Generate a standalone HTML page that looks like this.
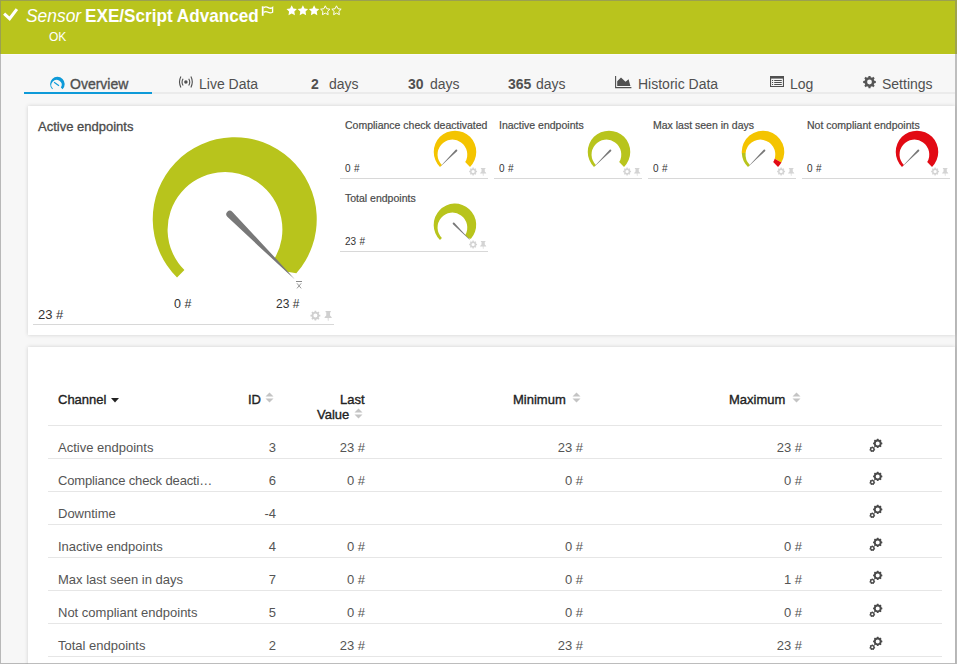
<!DOCTYPE html>
<html><head><meta charset="utf-8"><style>
*{box-sizing:border-box}
html,body{margin:0;padding:0}
body{width:957px;height:664px;overflow:hidden;position:relative;background:#f7f7f7;font-family:"Liberation Sans",sans-serif;color:#444}
.abs{position:absolute}
.gsvg{position:absolute;left:0;top:0}
#hdr{position:absolute;left:0;top:0;width:957px;height:54px;background:#b9c41d}
.t{position:absolute;white-space:nowrap;line-height:1}
.tab{position:absolute;top:77px;font-size:14px;color:#505050;white-space:nowrap;line-height:1}
.panel{position:absolute;background:#fff;box-shadow:0 0 4px rgba(0,0,0,0.16)}
.sep{position:absolute;left:48px;width:894px;height:1px;background:#e6e6e6}
.rt{position:absolute;font-size:13px;color:#555;white-space:nowrap;line-height:1}
.r{text-align:right}
.th{position:absolute;font-size:13px;color:#222;white-space:nowrap;line-height:1;-webkit-text-stroke:0.35px #222}
.gt{position:absolute;font-size:10.5px;color:#4a4a4a;-webkit-text-stroke:0.2px #4a4a4a;white-space:nowrap;line-height:1}
.gv{position:absolute;font-size:10px;word-spacing:0.6px;margin-top:1px;color:#333;white-space:nowrap;line-height:1}
.gl{position:absolute;left:340px;width:148px;height:1px;background:#d8d8d8}
</style></head><body>
<div id="hdr"></div>
<svg style="position:absolute;left:0;top:0" width="24" height="28" viewBox="0 0 24 28"><path d="M4.1 13.7L9.6 18.7L16.9 9.1" fill="none" stroke="#fff" stroke-width="3"/></svg>
<div class="t" style="left:26px;top:7px;font-size:18.5px;font-style:italic;color:#fff;transform-origin:0 0;transform:scaleX(0.94)">Sensor</div>
<div class="t" style="left:85px;top:7px;font-size:18.5px;font-weight:bold;color:#fff;transform-origin:0 0;transform:scaleX(0.927)">EXE/Script Advanced</div>
<svg class="gsvg" width="957" height="664" viewBox="0 0 957 664"><rect x="261.8" y="6.3" width="1.8" height="9.5" fill="#fff"/><path d="M263.6 7.6Q266 6.2 268.3 7.6T272.6 7.4V12.2Q270.3 13.5 268.1 12.3T263.6 12.3" fill="none" stroke="#fff" stroke-width="1.3"/></svg>
<svg style="position:absolute;left:286px;top:4px" width="58" height="13" viewBox="0 0 58 13"><path fill="#fff" d="M5.70 1.20L7.32 4.48L10.93 5.00L8.32 7.55L8.93 11.15L5.70 9.45L2.47 11.15L3.08 7.55L0.47 5.00L4.08 4.48Z"/><path fill="#fff" d="M16.90 1.20L18.52 4.48L22.13 5.00L19.52 7.55L20.13 11.15L16.90 9.45L13.67 11.15L14.28 7.55L11.67 5.00L15.28 4.48Z"/><path fill="#fff" d="M28.10 1.20L29.72 4.48L33.33 5.00L30.72 7.55L31.33 11.15L28.10 9.45L24.87 11.15L25.48 7.55L22.87 5.00L26.48 4.48Z"/><path fill="none" stroke="#fff" stroke-width="1" d="M39.30 1.80L40.74 4.72L43.96 5.19L41.63 7.46L42.18 10.66L39.30 9.15L36.42 10.66L36.97 7.46L34.64 5.19L37.86 4.72Z"/><path fill="none" stroke="#fff" stroke-width="1" d="M50.50 1.80L51.94 4.72L55.16 5.19L52.83 7.46L53.38 10.66L50.50 9.15L47.62 10.66L48.17 7.46L45.84 5.19L49.06 4.72Z"/></svg>
<div class="t" style="left:49px;top:31px;font-size:12px;color:#fff">OK</div>
<div class="abs" style="left:0;top:54px;width:957px;height:1px;background:#fbfbfb"></div>

<!-- tabs -->
<div class="abs" style="left:24px;top:92px;width:931px;height:2px;background:#ebebeb"></div>
<div class="abs" style="left:24px;top:92px;width:128px;height:2px;background:#0e9ad8"></div>
<svg class="gsvg" width="957" height="664" viewBox="0 0 957 664"><g transform="translate(57.4 84.1) scale(0.073)"><path fill="#0e9ad8" d="M-70.71 70.71A100 100 0 1 1 70.71 70.71L47.97 47.97A70.0 70.0 0 1 0 -61.70 61.70Z"/></g><path d="M54.1 82.2L59 85.7" stroke="#0e9ad8" stroke-width="1.2"/></svg>
<div class="tab" style="left:70px;font-size:14px;-webkit-text-stroke:0.35px #505050;color:#505050">Overview</div>
<svg class="gsvg" width="957" height="664" viewBox="0 0 957 664"><circle cx="185.9" cy="82.1" r="1.75" fill="#505050"/><path d="M180.9 76.6Q178.1 82 180.9 87.4M183.1 78.7Q181 82.1 183.1 85.5M188.7 78.7Q190.8 82.1 188.7 85.5M190.9 76.6Q193.7 82 190.9 87.4" fill="none" stroke="#505050" stroke-width="1.1"/></svg>
<div class="tab" style="left:199px">Live Data</div>
<div class="tab" style="left:311px;font-weight:bold">2</div>
<div class="tab" style="left:329px">days</div>
<div class="tab" style="left:408px;font-weight:bold">30</div>
<div class="tab" style="left:430px">days</div>
<div class="tab" style="left:508px;font-weight:bold">365</div>
<div class="tab" style="left:536px">days</div>
<svg class="abs" style="left:614px;top:76px" width="18" height="13" viewBox="0 0 18 13"><path d="M1.6 0V11.6H17.4" fill="none" stroke="#505050" stroke-width="1.1"/><path d="M3.2 10V5.2L7 1.6L11.5 5.8L14.6 3.2L16.4 10Z" fill="#505050"/></svg>
<div class="tab" style="left:638px">Historic Data</div>
<svg class="gsvg" width="957" height="664" viewBox="0 0 957 664"><g fill="#505050"><rect x="770" y="76" width="14" height="2.6"/><rect x="770" y="76" width="1.1" height="11"/><rect x="782.9" y="76" width="1.1" height="11"/><rect x="770" y="86" width="14" height="1"/><rect x="772" y="80" width="1.1" height="1"/><rect x="772" y="82" width="1.1" height="1"/><rect x="772" y="84" width="1.1" height="1"/><rect x="774.2" y="80" width="7.6" height="1"/><rect x="774.2" y="82" width="7.6" height="1"/><rect x="774.2" y="84" width="7.6" height="1"/></g></svg>
<div class="tab" style="left:790px">Log</div>
<svg class="abs" style="left:863px;top:76px" width="13" height="13" viewBox="0 0 13 13"><path fill="#555" fill-rule="evenodd" d="M5.33 1.14L5.50 -0.32L7.50 -0.32L7.67 1.14L9.11 1.74L10.26 0.82L11.68 2.24L10.76 3.39L11.36 4.83L12.82 5.00L12.82 7.00L11.36 7.17L10.76 8.61L11.68 9.76L10.26 11.18L9.11 10.26L7.67 10.86L7.50 12.32L5.50 12.32L5.33 10.86L3.89 10.26L2.74 11.18L1.32 9.76L2.24 8.61L1.64 7.17L0.18 7.00L0.18 5.00L1.64 4.83L2.24 3.39L1.32 2.24L2.74 0.82L3.89 1.74ZM8.90 6.00A2.4 2.4 0 1 0 4.10 6.00A2.4 2.4 0 1 0 8.90 6.00Z"/></svg>
<div class="tab" style="left:882px">Settings</div>

<!-- panel 1 -->
<div class="panel" style="left:28px;top:106px;width:927px;height:229px"></div>
<div class="t" style="left:38px;top:120px;font-size:13px;color:#4a4a4a;-webkit-text-stroke:0.3px #4a4a4a">Active endpoints</div>
<div class="t" style="left:38px;top:308px;font-size:13px;color:#333">23 #</div>
<div class="t" style="left:174px;top:298px;font-size:12.5px;color:#333">0 #</div>
<div class="t" style="left:276px;top:298px;font-size:12px;color:#333">23 #</div>
<div class="abs" style="left:296px;top:281px;width:6px;height:1px;background:#8a8a8a"></div><svg class="abs" style="left:296px;top:283px" width="6" height="6" viewBox="0 0 6 6"><path d="M1 0.3L5.2 5.4M5.2 0.3L1 5.4" stroke="#8f8f8f" stroke-width="0.9"/></svg>
<div class="abs" style="left:33px;top:324px;width:301px;height:1px;background:#d8d8d8"></div>

<div class="gt" style="left:345px;top:120px">Compliance check deactivated</div>
<div class="gv" style="left:345px;top:163px">0 #</div>
<div class="gl" style="top:178px"></div>
<div class="gt" style="left:499px;top:120px">Inactive endpoints</div>
<div class="gv" style="left:499px;top:163px">0 #</div>
<div class="gl" style="left:494px;top:178px"></div>
<div class="gt" style="left:653px;top:120px">Max last seen in days</div>
<div class="gv" style="left:653px;top:163px">0 #</div>
<div class="gl" style="left:648px;top:178px"></div>
<div class="gt" style="left:807px;top:120px">Not compliant endpoints</div>
<div class="gv" style="left:807px;top:163px">0 #</div>
<div class="gl" style="left:802px;top:178px"></div>
<div class="gt" style="left:345px;top:193px">Total endpoints</div>
<div class="gv" style="left:345px;top:236px">23 #</div>
<div class="gl" style="top:251px"></div>
<svg class="gsvg" width="957" height="664" viewBox="0 0 957 664"><g transform="translate(235 219.5) scale(0.82000)"><path fill="#b8c41c" d="M-70.71 70.71A100 100 0 1 1 74.8 65.7L63.7 63.7L47.97 47.97A70.0 70.0 0 1 0 -61.70 61.70Z"/><path fill="#787878" d="M-9.37 -3.36L28.26 31.87L63.61 64.63L72.83 72.83L64.63 63.61L31.87 28.26L-3.36 -9.37A4.25 4.25 0 0 0 -9.37 -3.36Z"/></g><g transform="translate(455 151.9) scale(0.21250)"><path fill="#f4c400" d="M-70.71 70.71A100 100 0 1 1 70.71 70.71L47.97 47.97A70.0 70.0 0 1 0 -61.70 61.70Z"/><path fill="#787878" d="M3.18 -9.55L-30.35 26.53L-61.51 60.43L-69.30 69.30L-60.43 61.51L-26.53 30.35L9.55 -3.18A4.5 4.5 0 0 0 3.18 -9.55Z"/></g><g transform="translate(609 151.9) scale(0.21250)"><path fill="#b8c41c" d="M-70.71 70.71A100 100 0 1 1 70.71 70.71L47.97 47.97A70.0 70.0 0 1 0 -61.70 61.70Z"/><path fill="#787878" d="M3.18 -9.55L-30.35 26.53L-61.51 60.43L-69.30 69.30L-60.43 61.51L-26.53 30.35L9.55 -3.18A4.5 4.5 0 0 0 3.18 -9.55Z"/></g><g transform="translate(763 151.9) scale(0.21250)"><path fill="#b8c41c" d="M-70.71 70.71A100 100 0 0 1 -99.89 4.7L-81.80 4.7A70.0 70.0 0 0 0 -61.70 61.70Z"/><path fill="#f4c400" d="M-99.89 4.7A100 100 0 1 1 86.60 50.00L55.01 31.76A70.0 70.0 0 1 0 -81.80 4.7Z"/><path fill="#e20a14" d="M86.60 50.00A100 100 0 0 1 70.71 70.71L47.97 47.97A70.0 70.0 0 0 0 55.01 31.76Z"/><path fill="#787878" d="M3.18 -9.55L-30.35 26.53L-61.51 60.43L-69.30 69.30L-60.43 61.51L-26.53 30.35L9.55 -3.18A4.5 4.5 0 0 0 3.18 -9.55Z"/></g><g transform="translate(917 151.9) scale(0.21250)"><path fill="#e20a14" d="M-70.71 70.71A100 100 0 1 1 70.71 70.71L47.97 47.97A70.0 70.0 0 1 0 -61.70 61.70Z"/><path fill="#787878" d="M3.18 -9.55L-30.35 26.53L-61.51 60.43L-69.30 69.30L-60.43 61.51L-26.53 30.35L9.55 -3.18A4.5 4.5 0 0 0 3.18 -9.55Z"/></g><g transform="translate(455 224.9) scale(0.21250)"><path fill="#b8c41c" d="M-70.71 70.71A100 100 0 1 1 74.8 65.7L63.7 63.7L47.97 47.97A70.0 70.0 0 1 0 -61.70 61.70Z"/><path fill="#787878" d="M-9.55 -3.18L28.16 31.98L63.58 64.66L72.83 72.83L64.66 63.58L31.98 28.16L-3.18 -9.55A4.5 4.5 0 0 0 -9.55 -3.18Z"/></g></svg>

<!-- panel 2 -->
<div class="panel" style="left:28px;top:347px;width:927px;height:330px"></div>
<div class="th" style="left:58px;top:393px">Channel</div>
<svg class="abs" style="left:111px;top:398px" width="8" height="5" viewBox="0 0 8 5"><path d="M0 0H8L4 4.5Z" fill="#222"/></svg>
<div class="th" style="left:248px;top:393px">ID</div>
<svg style="position:absolute;left:265px;top:392px" width="9" height="11" viewBox="0 0 9 11"><path d="M0.5 4.5L4.5 0.5L8.5 4.5Z" fill="#c4c4c4"/><path d="M0.5 6.5L4.5 10.5L8.5 6.5Z" fill="#c4c4c4"/></svg>
<div class="th" style="left:340px;top:393px">Last</div>
<div class="th" style="left:317px;top:408px">Value</div>
<svg style="position:absolute;left:354px;top:408px" width="9" height="11" viewBox="0 0 9 11"><path d="M0.5 4.5L4.5 0.5L8.5 4.5Z" fill="#c4c4c4"/><path d="M0.5 6.5L4.5 10.5L8.5 6.5Z" fill="#c4c4c4"/></svg>
<div class="th" style="left:513px;top:393px">Minimum</div>
<svg style="position:absolute;left:572px;top:392px" width="9" height="11" viewBox="0 0 9 11"><path d="M0.5 4.5L4.5 0.5L8.5 4.5Z" fill="#c4c4c4"/><path d="M0.5 6.5L4.5 10.5L8.5 6.5Z" fill="#c4c4c4"/></svg>
<div class="th" style="left:729px;top:393px">Maximum</div>
<svg style="position:absolute;left:792px;top:392px" width="9" height="11" viewBox="0 0 9 11"><path d="M0.5 4.5L4.5 0.5L8.5 4.5Z" fill="#c4c4c4"/><path d="M0.5 6.5L4.5 10.5L8.5 6.5Z" fill="#c4c4c4"/></svg>
<div class="sep" style="top:425px"></div><div class="rt" style="left:58px;top:441px;">Active endpoints</div><div class="rt r" style="right:681px;top:441px">3</div><div class="rt r" style="right:592px;top:441px">23 #</div><div class="rt r" style="right:374px;top:441px">23 #</div><div class="rt r" style="right:155px;top:441px">23 #</div><div class="sep" style="top:458px"></div><div class="rt" style="left:58px;top:474px;letter-spacing:-0.14px;">Compliance check deacti…</div><div class="rt r" style="right:681px;top:474px">6</div><div class="rt r" style="right:592px;top:474px">0 #</div><div class="rt r" style="right:374px;top:474px">0 #</div><div class="rt r" style="right:155px;top:474px">0 #</div><div class="sep" style="top:491px"></div><div class="rt" style="left:58px;top:507px;">Downtime</div><div class="rt r" style="right:681px;top:507px">-4</div><div class="sep" style="top:524px"></div><div class="rt" style="left:58px;top:540px;">Inactive endpoints</div><div class="rt r" style="right:681px;top:540px">4</div><div class="rt r" style="right:592px;top:540px">0 #</div><div class="rt r" style="right:374px;top:540px">0 #</div><div class="rt r" style="right:155px;top:540px">0 #</div><div class="sep" style="top:557px"></div><div class="rt" style="left:58px;top:573px;">Max last seen in days</div><div class="rt r" style="right:681px;top:573px">7</div><div class="rt r" style="right:592px;top:573px">0 #</div><div class="rt r" style="right:374px;top:573px">0 #</div><div class="rt r" style="right:155px;top:573px">1 #</div><div class="sep" style="top:590px"></div><div class="rt" style="left:58px;top:606px;">Not compliant endpoints</div><div class="rt r" style="right:681px;top:606px">5</div><div class="rt r" style="right:592px;top:606px">0 #</div><div class="rt r" style="right:374px;top:606px">0 #</div><div class="rt r" style="right:155px;top:606px">0 #</div><div class="sep" style="top:623px"></div><div class="rt" style="left:58px;top:639px;">Total endpoints</div><div class="rt r" style="right:681px;top:639px">2</div><div class="rt r" style="right:592px;top:639px">23 #</div><div class="rt r" style="right:374px;top:639px">23 #</div><div class="rt r" style="right:155px;top:639px">23 #</div><div class="sep" style="top:656px"></div>
<svg class="gsvg" width="957" height="664" viewBox="0 0 957 664"><path fill="#d0d0d0" fill-rule="evenodd" d="M314.49 311.81L314.62 310.66L316.18 310.66L316.31 311.81L317.44 312.27L318.34 311.55L319.45 312.66L318.73 313.56L319.19 314.69L320.34 314.82L320.34 316.38L319.19 316.51L318.73 317.64L319.45 318.54L318.34 319.65L317.44 318.93L316.31 319.39L316.18 320.54L314.62 320.54L314.49 319.39L313.36 318.93L312.46 319.65L311.35 318.54L312.07 317.64L311.61 316.51L310.46 316.38L310.46 314.82L311.61 314.69L312.07 313.56L311.35 312.66L312.46 311.55L313.36 312.27ZM317.40 315.60A2.0 2.0 0 1 0 313.40 315.60A2.0 2.0 0 1 0 317.40 315.60Z"/><path fill="#d0d0d0" d="M325.55 311.00L330.75 311.00L330.75 312.25L330.04 312.25L330.04 315.50L331.70 317.25L331.70 318.00L328.62 318.00L328.39 321.00L327.91 321.00L327.68 318.00L324.60 318.00L324.60 317.25L326.26 315.50L326.26 312.25L325.55 312.25Z"/><path fill="#d4d4d4" fill-rule="evenodd" d="M472.37 168.47L472.47 167.55L473.73 167.55L473.83 168.47L474.73 168.84L475.45 168.26L476.34 169.15L475.76 169.87L476.13 170.77L477.05 170.87L477.05 172.13L476.13 172.23L475.76 173.13L476.34 173.85L475.45 174.74L474.73 174.16L473.83 174.53L473.73 175.45L472.47 175.45L472.37 174.53L471.47 174.16L470.75 174.74L469.86 173.85L470.44 173.13L470.07 172.23L469.15 172.13L469.15 170.87L470.07 170.77L470.44 169.87L469.86 169.15L470.75 168.26L471.47 168.84ZM474.70 171.50A1.6 1.6 0 1 0 471.50 171.50A1.6 1.6 0 1 0 474.70 171.50Z"/><path fill="#d4d4d4" d="M480.91 167.90L485.39 167.90L485.39 168.91L484.78 168.91L484.78 171.55L486.20 172.96L486.20 173.57L483.56 173.57L483.35 176.00L482.95 176.00L482.74 173.57L480.10 173.57L480.10 172.96L481.52 171.55L481.52 168.91L480.91 168.91Z"/><path fill="#d4d4d4" fill-rule="evenodd" d="M626.37 168.47L626.47 167.55L627.73 167.55L627.83 168.47L628.73 168.84L629.45 168.26L630.34 169.15L629.76 169.87L630.13 170.77L631.05 170.87L631.05 172.13L630.13 172.23L629.76 173.13L630.34 173.85L629.45 174.74L628.73 174.16L627.83 174.53L627.73 175.45L626.47 175.45L626.37 174.53L625.47 174.16L624.75 174.74L623.86 173.85L624.44 173.13L624.07 172.23L623.15 172.13L623.15 170.87L624.07 170.77L624.44 169.87L623.86 169.15L624.75 168.26L625.47 168.84ZM628.70 171.50A1.6 1.6 0 1 0 625.50 171.50A1.6 1.6 0 1 0 628.70 171.50Z"/><path fill="#d4d4d4" d="M634.91 167.90L639.39 167.90L639.39 168.91L638.78 168.91L638.78 171.55L640.20 172.96L640.20 173.57L637.56 173.57L637.35 176.00L636.95 176.00L636.74 173.57L634.10 173.57L634.10 172.96L635.52 171.55L635.52 168.91L634.91 168.91Z"/><path fill="#d4d4d4" fill-rule="evenodd" d="M780.37 168.47L780.47 167.55L781.73 167.55L781.83 168.47L782.73 168.84L783.45 168.26L784.34 169.15L783.76 169.87L784.13 170.77L785.05 170.87L785.05 172.13L784.13 172.23L783.76 173.13L784.34 173.85L783.45 174.74L782.73 174.16L781.83 174.53L781.73 175.45L780.47 175.45L780.37 174.53L779.47 174.16L778.75 174.74L777.86 173.85L778.44 173.13L778.07 172.23L777.15 172.13L777.15 170.87L778.07 170.77L778.44 169.87L777.86 169.15L778.75 168.26L779.47 168.84ZM782.70 171.50A1.6 1.6 0 1 0 779.50 171.50A1.6 1.6 0 1 0 782.70 171.50Z"/><path fill="#d4d4d4" d="M788.91 167.90L793.39 167.90L793.39 168.91L792.78 168.91L792.78 171.55L794.20 172.96L794.20 173.57L791.56 173.57L791.35 176.00L790.95 176.00L790.74 173.57L788.10 173.57L788.10 172.96L789.52 171.55L789.52 168.91L788.91 168.91Z"/><path fill="#d4d4d4" fill-rule="evenodd" d="M934.37 168.47L934.47 167.55L935.73 167.55L935.83 168.47L936.73 168.84L937.45 168.26L938.34 169.15L937.76 169.87L938.13 170.77L939.05 170.87L939.05 172.13L938.13 172.23L937.76 173.13L938.34 173.85L937.45 174.74L936.73 174.16L935.83 174.53L935.73 175.45L934.47 175.45L934.37 174.53L933.47 174.16L932.75 174.74L931.86 173.85L932.44 173.13L932.07 172.23L931.15 172.13L931.15 170.87L932.07 170.77L932.44 169.87L931.86 169.15L932.75 168.26L933.47 168.84ZM936.70 171.50A1.6 1.6 0 1 0 933.50 171.50A1.6 1.6 0 1 0 936.70 171.50Z"/><path fill="#d4d4d4" d="M942.91 167.90L947.39 167.90L947.39 168.91L946.78 168.91L946.78 171.55L948.20 172.96L948.20 173.57L945.56 173.57L945.35 176.00L944.95 176.00L944.74 173.57L942.10 173.57L942.10 172.96L943.52 171.55L943.52 168.91L942.91 168.91Z"/><path fill="#d4d4d4" fill-rule="evenodd" d="M472.37 241.47L472.47 240.55L473.73 240.55L473.83 241.47L474.73 241.84L475.45 241.26L476.34 242.15L475.76 242.87L476.13 243.77L477.05 243.87L477.05 245.13L476.13 245.23L475.76 246.13L476.34 246.85L475.45 247.74L474.73 247.16L473.83 247.53L473.73 248.45L472.47 248.45L472.37 247.53L471.47 247.16L470.75 247.74L469.86 246.85L470.44 246.13L470.07 245.23L469.15 245.13L469.15 243.87L470.07 243.77L470.44 242.87L469.86 242.15L470.75 241.26L471.47 241.84ZM474.70 244.50A1.6 1.6 0 1 0 471.50 244.50A1.6 1.6 0 1 0 474.70 244.50Z"/><path fill="#d4d4d4" d="M480.91 240.90L485.39 240.90L485.39 241.91L484.78 241.91L484.78 244.55L486.20 245.96L486.20 246.57L483.56 246.57L483.35 249.00L482.95 249.00L482.74 246.57L480.10 246.57L480.10 245.96L481.52 244.55L481.52 241.91L480.91 241.91Z"/><path fill="#4a4a4a" fill-rule="evenodd" d="M876.77 439.51L876.96 438.76L878.44 438.76L878.63 439.51L879.79 439.99L880.46 439.60L881.50 440.64L881.11 441.31L881.59 442.47L882.34 442.66L882.34 444.14L881.59 444.33L881.11 445.49L881.50 446.16L880.46 447.20L879.79 446.81L878.63 447.29L878.44 448.04L876.96 448.04L876.77 447.29L875.61 446.81L874.94 447.20L873.90 446.16L874.29 445.49L873.81 444.33L873.06 444.14L873.06 442.66L873.81 442.47L874.29 441.31L873.90 440.64L874.94 439.60L875.61 439.99ZM879.70 443.40A2.0 2.0 0 1 0 875.70 443.40A2.0 2.0 0 1 0 879.70 443.40Z"/><path fill="#4a4a4a" fill-rule="evenodd" d="M871.66 446.99L871.78 446.45L872.82 446.45L872.94 446.99L873.71 447.36L874.21 447.12L874.85 447.93L874.51 448.36L874.70 449.19L875.20 449.43L874.97 450.44L874.41 450.44L873.88 451.11L874.00 451.65L873.07 452.10L872.73 451.66L871.87 451.66L871.53 452.10L870.60 451.65L870.72 451.11L870.19 450.44L869.63 450.44L869.40 449.43L869.90 449.19L870.09 448.36L869.75 447.93L870.39 447.12L870.89 447.36ZM873.30 449.30A1.0 1.0 0 1 0 871.30 449.30A1.0 1.0 0 1 0 873.30 449.30Z"/><path fill="#4a4a4a" fill-rule="evenodd" d="M876.77 472.51L876.96 471.76L878.44 471.76L878.63 472.51L879.79 472.99L880.46 472.60L881.50 473.64L881.11 474.31L881.59 475.47L882.34 475.66L882.34 477.14L881.59 477.33L881.11 478.49L881.50 479.16L880.46 480.20L879.79 479.81L878.63 480.29L878.44 481.04L876.96 481.04L876.77 480.29L875.61 479.81L874.94 480.20L873.90 479.16L874.29 478.49L873.81 477.33L873.06 477.14L873.06 475.66L873.81 475.47L874.29 474.31L873.90 473.64L874.94 472.60L875.61 472.99ZM879.70 476.40A2.0 2.0 0 1 0 875.70 476.40A2.0 2.0 0 1 0 879.70 476.40Z"/><path fill="#4a4a4a" fill-rule="evenodd" d="M871.66 479.99L871.78 479.45L872.82 479.45L872.94 479.99L873.71 480.36L874.21 480.12L874.85 480.93L874.51 481.36L874.70 482.19L875.20 482.43L874.97 483.44L874.41 483.44L873.88 484.11L874.00 484.65L873.07 485.10L872.73 484.66L871.87 484.66L871.53 485.10L870.60 484.65L870.72 484.11L870.19 483.44L869.63 483.44L869.40 482.43L869.90 482.19L870.09 481.36L869.75 480.93L870.39 480.12L870.89 480.36ZM873.30 482.30A1.0 1.0 0 1 0 871.30 482.30A1.0 1.0 0 1 0 873.30 482.30Z"/><path fill="#4a4a4a" fill-rule="evenodd" d="M876.77 505.51L876.96 504.76L878.44 504.76L878.63 505.51L879.79 505.99L880.46 505.60L881.50 506.64L881.11 507.31L881.59 508.47L882.34 508.66L882.34 510.14L881.59 510.33L881.11 511.49L881.50 512.16L880.46 513.20L879.79 512.81L878.63 513.29L878.44 514.04L876.96 514.04L876.77 513.29L875.61 512.81L874.94 513.20L873.90 512.16L874.29 511.49L873.81 510.33L873.06 510.14L873.06 508.66L873.81 508.47L874.29 507.31L873.90 506.64L874.94 505.60L875.61 505.99ZM879.70 509.40A2.0 2.0 0 1 0 875.70 509.40A2.0 2.0 0 1 0 879.70 509.40Z"/><path fill="#4a4a4a" fill-rule="evenodd" d="M871.66 512.99L871.78 512.45L872.82 512.45L872.94 512.99L873.71 513.36L874.21 513.12L874.85 513.93L874.51 514.36L874.70 515.19L875.20 515.43L874.97 516.44L874.41 516.44L873.88 517.11L874.00 517.65L873.07 518.10L872.73 517.66L871.87 517.66L871.53 518.10L870.60 517.65L870.72 517.11L870.19 516.44L869.63 516.44L869.40 515.43L869.90 515.19L870.09 514.36L869.75 513.93L870.39 513.12L870.89 513.36ZM873.30 515.30A1.0 1.0 0 1 0 871.30 515.30A1.0 1.0 0 1 0 873.30 515.30Z"/><path fill="#4a4a4a" fill-rule="evenodd" d="M876.77 538.51L876.96 537.76L878.44 537.76L878.63 538.51L879.79 538.99L880.46 538.60L881.50 539.64L881.11 540.31L881.59 541.47L882.34 541.66L882.34 543.14L881.59 543.33L881.11 544.49L881.50 545.16L880.46 546.20L879.79 545.81L878.63 546.29L878.44 547.04L876.96 547.04L876.77 546.29L875.61 545.81L874.94 546.20L873.90 545.16L874.29 544.49L873.81 543.33L873.06 543.14L873.06 541.66L873.81 541.47L874.29 540.31L873.90 539.64L874.94 538.60L875.61 538.99ZM879.70 542.40A2.0 2.0 0 1 0 875.70 542.40A2.0 2.0 0 1 0 879.70 542.40Z"/><path fill="#4a4a4a" fill-rule="evenodd" d="M871.66 545.99L871.78 545.45L872.82 545.45L872.94 545.99L873.71 546.36L874.21 546.12L874.85 546.93L874.51 547.36L874.70 548.19L875.20 548.43L874.97 549.44L874.41 549.44L873.88 550.11L874.00 550.65L873.07 551.10L872.73 550.66L871.87 550.66L871.53 551.10L870.60 550.65L870.72 550.11L870.19 549.44L869.63 549.44L869.40 548.43L869.90 548.19L870.09 547.36L869.75 546.93L870.39 546.12L870.89 546.36ZM873.30 548.30A1.0 1.0 0 1 0 871.30 548.30A1.0 1.0 0 1 0 873.30 548.30Z"/><path fill="#4a4a4a" fill-rule="evenodd" d="M876.77 571.51L876.96 570.76L878.44 570.76L878.63 571.51L879.79 571.99L880.46 571.60L881.50 572.64L881.11 573.31L881.59 574.47L882.34 574.66L882.34 576.14L881.59 576.33L881.11 577.49L881.50 578.16L880.46 579.20L879.79 578.81L878.63 579.29L878.44 580.04L876.96 580.04L876.77 579.29L875.61 578.81L874.94 579.20L873.90 578.16L874.29 577.49L873.81 576.33L873.06 576.14L873.06 574.66L873.81 574.47L874.29 573.31L873.90 572.64L874.94 571.60L875.61 571.99ZM879.70 575.40A2.0 2.0 0 1 0 875.70 575.40A2.0 2.0 0 1 0 879.70 575.40Z"/><path fill="#4a4a4a" fill-rule="evenodd" d="M871.66 578.99L871.78 578.45L872.82 578.45L872.94 578.99L873.71 579.36L874.21 579.12L874.85 579.93L874.51 580.36L874.70 581.19L875.20 581.43L874.97 582.44L874.41 582.44L873.88 583.11L874.00 583.65L873.07 584.10L872.73 583.66L871.87 583.66L871.53 584.10L870.60 583.65L870.72 583.11L870.19 582.44L869.63 582.44L869.40 581.43L869.90 581.19L870.09 580.36L869.75 579.93L870.39 579.12L870.89 579.36ZM873.30 581.30A1.0 1.0 0 1 0 871.30 581.30A1.0 1.0 0 1 0 873.30 581.30Z"/><path fill="#4a4a4a" fill-rule="evenodd" d="M876.77 604.51L876.96 603.76L878.44 603.76L878.63 604.51L879.79 604.99L880.46 604.60L881.50 605.64L881.11 606.31L881.59 607.47L882.34 607.66L882.34 609.14L881.59 609.33L881.11 610.49L881.50 611.16L880.46 612.20L879.79 611.81L878.63 612.29L878.44 613.04L876.96 613.04L876.77 612.29L875.61 611.81L874.94 612.20L873.90 611.16L874.29 610.49L873.81 609.33L873.06 609.14L873.06 607.66L873.81 607.47L874.29 606.31L873.90 605.64L874.94 604.60L875.61 604.99ZM879.70 608.40A2.0 2.0 0 1 0 875.70 608.40A2.0 2.0 0 1 0 879.70 608.40Z"/><path fill="#4a4a4a" fill-rule="evenodd" d="M871.66 611.99L871.78 611.45L872.82 611.45L872.94 611.99L873.71 612.36L874.21 612.12L874.85 612.93L874.51 613.36L874.70 614.19L875.20 614.43L874.97 615.44L874.41 615.44L873.88 616.11L874.00 616.65L873.07 617.10L872.73 616.66L871.87 616.66L871.53 617.10L870.60 616.65L870.72 616.11L870.19 615.44L869.63 615.44L869.40 614.43L869.90 614.19L870.09 613.36L869.75 612.93L870.39 612.12L870.89 612.36ZM873.30 614.30A1.0 1.0 0 1 0 871.30 614.30A1.0 1.0 0 1 0 873.30 614.30Z"/><path fill="#4a4a4a" fill-rule="evenodd" d="M876.77 637.51L876.96 636.76L878.44 636.76L878.63 637.51L879.79 637.99L880.46 637.60L881.50 638.64L881.11 639.31L881.59 640.47L882.34 640.66L882.34 642.14L881.59 642.33L881.11 643.49L881.50 644.16L880.46 645.20L879.79 644.81L878.63 645.29L878.44 646.04L876.96 646.04L876.77 645.29L875.61 644.81L874.94 645.20L873.90 644.16L874.29 643.49L873.81 642.33L873.06 642.14L873.06 640.66L873.81 640.47L874.29 639.31L873.90 638.64L874.94 637.60L875.61 637.99ZM879.70 641.40A2.0 2.0 0 1 0 875.70 641.40A2.0 2.0 0 1 0 879.70 641.40Z"/><path fill="#4a4a4a" fill-rule="evenodd" d="M871.66 644.99L871.78 644.45L872.82 644.45L872.94 644.99L873.71 645.36L874.21 645.12L874.85 645.93L874.51 646.36L874.70 647.19L875.20 647.43L874.97 648.44L874.41 648.44L873.88 649.11L874.00 649.65L873.07 650.10L872.73 649.66L871.87 649.66L871.53 650.10L870.60 649.65L870.72 649.11L870.19 648.44L869.63 648.44L869.40 647.43L869.90 647.19L870.09 646.36L869.75 645.93L870.39 645.12L870.89 645.36ZM873.30 647.30A1.0 1.0 0 1 0 871.30 647.30A1.0 1.0 0 1 0 873.30 647.30Z"/></svg>

<!-- frame -->
<div class="abs" style="left:0;top:0;width:957px;height:664px;border:1px solid rgba(128,128,128,0.52);border-right:2px solid rgba(128,128,128,0.48)"></div>
</body></html>
